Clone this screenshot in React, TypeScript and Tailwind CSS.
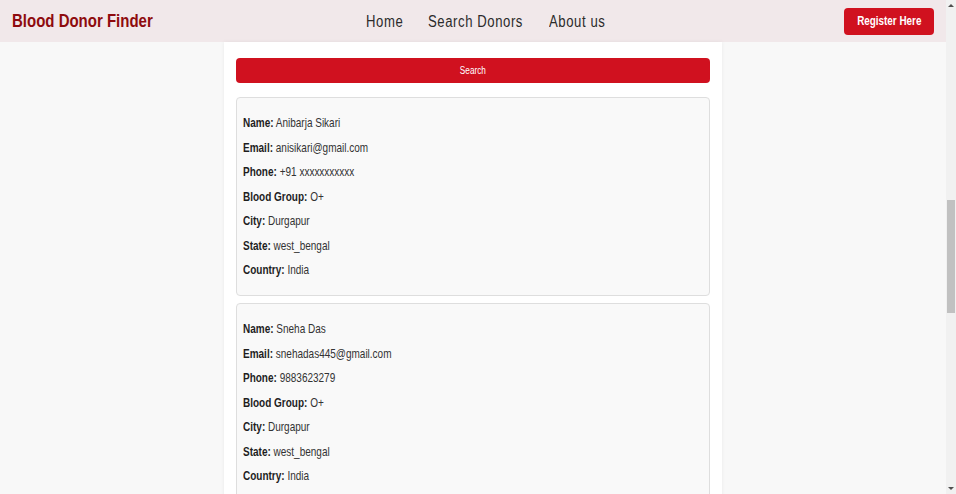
import React from "react";

const donors = [
  {
    name: "Anibarja Sikari",
    email: "anisikari@gmail.com",
    phone: "+91 xxxxxxxxxxx",
    group: "O+",
    city: "Durgapur",
    state: "west_bengal",
    country: "India",
  },
  {
    name: "Sneha Das",
    email: "snehadas445@gmail.com",
    phone: "9883623279",
    group: "O+",
    city: "Durgapur",
    state: "west_bengal",
    country: "India",
  },
];

function Row({ label, value }: { label: string; value: string }) {
  return (
    <p className="leading-[24.5px] text-[12.2px] text-[#333]">
      <span className="inline-block origin-left scale-x-[0.82] whitespace-nowrap">
        <span className="font-bold text-[#1e1e1e]">{label}:</span> {value}
      </span>
    </p>
  );
}

function NavItem({ w, children }: { w: string; children: React.ReactNode }) {
  return (
    <span className={`block ${w}`}>
      <span className="inline-block origin-left scale-x-[0.82] whitespace-nowrap">{children}</span>
    </span>
  );
}

export default function App() {
  return (
    <div
      className="flex h-[494px] w-[956px] overflow-hidden bg-[#f8f8f8]"
      style={{ fontFamily: '"Liberation Sans", Arial, sans-serif' }}
    >
      <div className="flex min-w-0 flex-1 flex-col">
        <header className="flex h-[42px] shrink-0 items-center bg-[#f1e8ea] px-[12px]">
          <div className="w-[140px] text-[18.3px] font-bold text-[#8e0b0e]">
            <span className="inline-block origin-left scale-x-[0.82] whitespace-nowrap">Blood Donor Finder</span>
          </div>
          <nav className="ml-[214px] mt-[1px] flex items-center gap-[26px] text-[16px] tracking-[0.7px] text-[#2b2b2b]">
            <NavItem w="w-[36px]">Home</NavItem>
            <NavItem w="w-[95px]">Search Donors</NavItem>
            <NavItem w="w-[56px]">About us</NavItem>
          </nav>
          <button className="ml-auto flex h-[27px] w-[90px] items-center justify-center rounded-[4px] bg-[#d0111f] text-[13px] font-bold text-white">
            <span className="inline-block scale-x-[0.76] whitespace-nowrap">Register Here</span>
          </button>
        </header>
        <main className="flex-1">
          <div className="mx-auto h-full w-[498px] bg-white px-[12px] pt-[16px] shadow-[0_0_4px_rgba(0,0,0,0.06)]">
            <button className="flex h-[25px] w-full items-center justify-center rounded-[4px] bg-[#d0111f] text-[10px] text-white">
              <span className="inline-block scale-x-[0.82]">Search</span>
            </button>
            <div className="mt-[14px] flex flex-col gap-[7px]">
              {donors.map((d) => (
                <div
                  key={d.email}
                  className="rounded-[4px] border border-[#dedede] bg-[#f9f9f9] px-[6px] pb-[12.5px] pt-[13px]"
                >
                  <Row label="Name" value={d.name} />
                  <Row label="Email" value={d.email} />
                  <Row label="Phone" value={d.phone} />
                  <Row label="Blood Group" value={d.group} />
                  <Row label="City" value={d.city} />
                  <Row label="State" value={d.state} />
                  <Row label="Country" value={d.country} />
                </div>
              ))}
            </div>
          </div>
        </main>
      </div>
      <div className="relative flex w-[10px] shrink-0 flex-col items-center bg-[#f1f1f1]">
        <div className="mt-[4px] h-0 w-0 border-x-[3px] border-b-[3px] border-x-transparent border-b-[#505050]" />
        <div className="absolute left-[1px] top-[200px] h-[113px] w-[8px] bg-[#c1c1c1]" />
        <div className="absolute bottom-[4px] h-0 w-0 border-x-[3px] border-t-[3px] border-x-transparent border-t-[#505050]" />
      </div>
    </div>
  );
}
